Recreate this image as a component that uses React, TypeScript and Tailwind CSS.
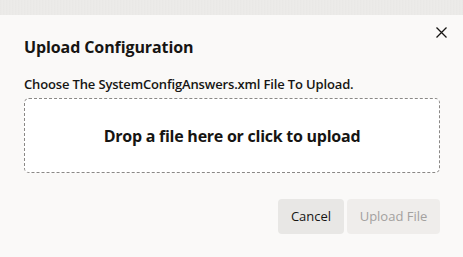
import React from "react";

export default function App() {
  return (
    <div
      className="w-[463px] h-[257px] overflow-hidden flex flex-col bg-[#e9e8e6]"
      style={{ fontFamily: '"Open Sans", "Noto Sans", sans-serif' }}
    >
      <div className="h-[15px] shrink-0 bg-[repeating-linear-gradient(90deg,#e4e3e1_0px,#efeeec_1px,#e7e6e4_2px,#f1f0ee_3px)]" />
      <div className="relative flex-1 bg-[#faf9f8] pl-6 pr-[23px] pt-[20px] text-[#161513]">
        <button className="absolute right-[16px] top-[12px] w-[11px] h-[11px] flex items-center justify-center">
          <svg width="11" height="11" viewBox="0 0 11 11" fill="none">
            <path d="M0.5 0.5 L10.5 10.5 M10.5 0.5 L0.5 10.5" stroke="#161513" strokeWidth="1.3" />
          </svg>
        </button>
        <h1 className="text-[16px] font-bold leading-6 tracking-[-0.1px]">Upload Configuration</h1>
        <p className="mt-[15px] text-[13px] font-semibold leading-5 tracking-[-0.15px]">
          Choose The SystemConfigAnswers.xml File To Upload.
        </p>
        <div className="mt-[4px] h-[75px] rounded-[5px] border border-dashed border-[#8a8886] bg-white flex items-center justify-center">
          <span className="text-[16px] font-bold tracking-[-0.25px]">Drop a file here or click to upload</span>
        </div>
        <div className="mt-[26px] flex justify-end gap-[3px]">
          <button className="h-[35px] w-[66px] rounded-[4px] bg-[#e8e7e5] text-[13px] text-[#161513]">Cancel</button>
          <button className="h-[35px] w-[93px] rounded-[4px] bg-[#efedeb] text-[13px] text-[#a3a19f]">Upload File</button>
        </div>
      </div>
    </div>
  );
}
